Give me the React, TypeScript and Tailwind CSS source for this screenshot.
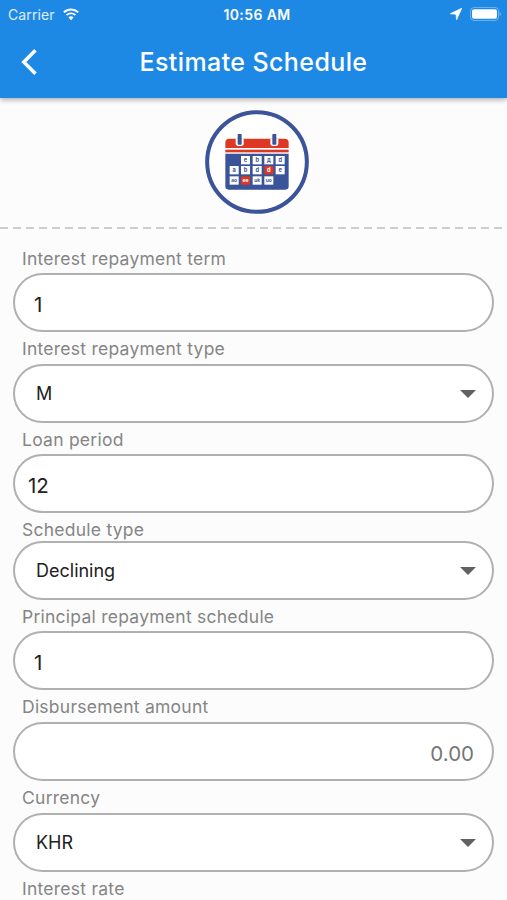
import { useState } from 'react';

type Field = {
  label: string;
  value: string;
  kind: 'input' | 'select' | 'amount';
  labelClass: string;
  valueClass: string;
};

const FIELDS: Field[] = [
  { label: 'Interest repayment term', value: '1', kind: 'input', labelClass: 'h-[31px]', valueClass: 'pl-[19px]' },
  { label: 'Interest repayment type', value: 'M', kind: 'select', labelClass: 'h-8', valueClass: '' },
  { label: 'Loan period', value: '12', kind: 'input', labelClass: 'h-[31px]', valueClass: 'pl-[13px]' },
  { label: 'Schedule type', value: 'Declining', kind: 'select', labelClass: 'h-7', valueClass: '' },
  { label: 'Principal repayment schedule', value: '1', kind: 'input', labelClass: 'h-[31px]', valueClass: 'pl-[19px]' },
  { label: 'Disbursement amount', value: '0.00', kind: 'amount', labelClass: 'h-8', valueClass: '' },
  { label: 'Currency', value: 'KHR', kind: 'select', labelClass: 'h-8', valueClass: '' },
];

// x, y, label and whether the day is marked red
const DAYS: [number, number, string, boolean][] = [
  [132, 156, 'e', false],
  [167, 156, 'b', false],
  [202, 156, 'д', false],
  [236, 156, 'd', false],
  [98, 186, 'a', false],
  [132, 186, 'b', false],
  [167, 186, 'd', false],
  [202, 186, 'd', true],
  [236, 186, 'e', false],
  [98, 217, 'ao', false],
  [132, 217, 'ee', true],
  [167, 217, 'uk', false],
  [202, 217, 'uo', false],
];

function CalendarLogo() {
  return (
    <svg viewBox="24 18 312 312" className="h-[104px] w-[104px]">
      <circle cx="180" cy="174" r="149.500" fill="#fff" stroke="#3b5499" strokeWidth="12" />
      <path d="M85 149h190v98a10 10 0 0 1-10 10H95a10 10 0 0 1-10-10z" fill="#3b5499" />
      <path d="M85 132v-16a12 12 0 0 1 12-12h166a12 12 0 0 1 12 12v16z" fill="#dc3823" />
      <rect x="85" y="137" width="190" height="8" fill="#dc3823" />
      {[120, 224].map((x) => (
        <g key={x}>
          <path d={`M${x - 4} 104h24v14a8 8 0 0 1-8 8h-8a8 8 0 0 1-8-8z`} fill="#fff" />
          <rect x={x + 2} y="90" width="12" height="32" rx="2" fill="#3b5499" />
        </g>
      ))}
      {DAYS.map(([x, y, text, marked]) => (
        <g key={`${x}-${y}`}>
          <rect x={x} y={y} width="27" height="25" fill={marked ? '#dc3823' : '#fff'} />
          <text
            x={x + 13.5}
            y={y + 18}
            textAnchor="middle"
            fontSize={text.length > 1 ? 15 : 17}
            fontWeight="700"
            fill={marked ? '#fff' : '#3b5499'}
          >
            {text}
          </text>
        </g>
      ))}
    </svg>
  );
}

function StatusBar() {
  return (
    <div className="grid h-7 grid-cols-3 items-center pl-2 pr-[6px] text-[14px]">
      <div className="flex items-center gap-[7px] text-white/85">
        <span className="tracking-[0.1px]">Carrier</span>
        <svg viewBox="0 0 18 13" className="h-[13px] w-[18px]" fill="#fff">
          <path d="M9 2.4c2.5 0 4.8 1 6.5 2.6l1.3-1.4A11.3 11.3 0 0 0 9 .5C6 .5 3.300 1.700 1.200 3.600L2.500 5A9.400 9.400 0 0 1 9 2.400z" />
          <path d="M9 6.300c1.500 0 2.800.5 3.800 1.500l1.300-1.400A7.400 7.400 0 0 0 9 4.400c-2 0-3.700.8-5.100 2l1.300 1.400c1-1 2.300-1.500 3.800-1.500z" />
          <path d="M9 12.300l2.500-2.900A3.700 3.700 0 0 0 9 8.300c-1 0-1.800.4-2.500 1.100z" />
        </svg>
      </div>
      <span className="whitespace-nowrap pl-[5px] text-center text-[14px] font-semibold tracking-[0.4px] text-white">10:56 AM</span>
      <div className="flex items-center justify-end gap-2">
        <svg viewBox="0 0 12 12" className="h-3 w-3" fill="#fff">
          <path d="M11.800.2L.3 5.700l5.700.5.600 5.600z" stroke="#fff" strokeWidth=".7" />
        </svg>
        <svg viewBox="0 0 31 14" className="h-[14px] w-[31px]">
          <rect x=".5" y=".5" width="28" height="13" rx="3.500" fill="none" stroke="#fff" strokeOpacity=".35" />
          <rect x="2" y="2.200" width="25" height="9.600" rx="2" fill="#fff" />
          <path d="M29.600 4.800c1.500.8 1.500 3.600 0 4.400z" fill="#fff" fillOpacity=".45" />
        </svg>
      </div>
    </div>
  );
}

function FieldBox({ field }: { field: Field }) {
  const [value, setValue] = useState(field.value);

  if (field.kind === 'select') {
    return (
      <button
        type="button"
        className="flex h-[59px] w-full items-center justify-between rounded-full border-2 border-[#b0b0b0] bg-white pl-[21px] pr-4 text-[18px] text-[#212121]"
      >
        <span>{value}</span>
        <svg viewBox="0 0 16 8" className="h-2 w-4" fill="#616161">
          <path d="M0 0h16L8 8z" />
        </svg>
      </button>
    );
  }

  return (
    <div className="flex h-[59px] items-center rounded-full border-2 border-[#b0b0b0] bg-white pt-[6px]">
      {field.kind === 'amount' ? (
        <input
          placeholder={field.value}
          className="w-full pr-[18px] text-right text-[20.5px] text-[#757575] outline-none placeholder:text-[#757575]"
        />
      ) : (
        <input
          value={value}
          onChange={(e) => setValue(e.target.value)}
          className={`w-full text-[20.5px] text-[#212121] outline-none ${field.valueClass}`}
        />
      )}
    </div>
  );
}

export default function App() {
  return (
    <div className="flex h-[900px] w-full flex-col overflow-hidden bg-[#fcfcfc] font-['Inter',sans-serif]">
      {/* App bar */}
      <header className="h-[98px] shrink-0 bg-[#1e88e5] shadow-[0_2px_5px_rgba(0,0,0,0.3)]">
        <StatusBar />
        <div className="grid h-[68px] grid-cols-[60px_1fr_60px] items-center">
          <button type="button" aria-label="Back" className="pl-[21px]">
            <svg viewBox="0 0 16 26" className="h-[26px] w-4" fill="none" stroke="#fff" strokeWidth="3.500">
              <path d="M14.500 1.300L2.800 13l11.700 11.700" />
            </svg>
          </button>
          <h1 className="pt-px text-center text-[25px] font-medium tracking-[0.4px] text-white">Estimate Schedule</h1>
        </div>
      </header>

      {/* Logo */}
      <div className="flex h-[129px] shrink-0 justify-center pl-[7px] pt-3">
        <CalendarLogo />
      </div>
      <svg className="h-[2px] w-full shrink-0">
        <line x1="0" y1="1" x2="502" y2="1" stroke="#bdbdbd" strokeWidth="1.500" strokeDasharray="8 5" />
      </svg>

      {/* Form */}
      <main className="shrink-0 px-[13px] pt-[13px]">
        {FIELDS.map((field) => (
          <div key={field.label}>
            <div className={`pl-[9px] pt-1 text-[17.5px] leading-[26px] tracking-[0.25px] text-[#858585] ${field.labelClass}`}>
              {field.label}
            </div>
            <FieldBox field={field} />
          </div>
        ))}
        <div className="pl-[9px] pt-1 text-[17.5px] leading-[26px] tracking-[0.25px] text-[#858585]">Interest rate</div>
      </main>
    </div>
  );
}
